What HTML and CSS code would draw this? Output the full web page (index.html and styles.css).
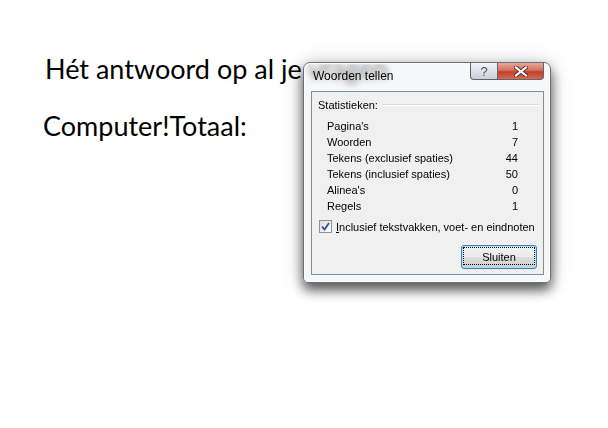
FILE: index.html
```html
<!DOCTYPE html>
<html lang="nl">
<head>
  <meta charset="UTF-8" />
  <title>Woorden tellen</title>
  <link rel="stylesheet" href="styles.css">
</head>
<body>
  <div class="doc">
    <p class="doc-line first">Hét antwoord op al je vragen</p>
    <p class="doc-line">Computer!Totaal:</p>
  </div>

  <div class="window">
    <div class="titlebar">
      <span class="title">Woorden tellen</span>
      <div class="caption-buttons">
        <div class="cap help">?</div>
        <div class="cap close">
          <svg width="14" height="11" viewBox="0 0 14 11">
            <path d="M2 1.5 L12 9.5 M12 1.5 L2 9.5" stroke="#5a2a22" stroke-width="4" stroke-linecap="square"/>
            <path d="M2 1.5 L12 9.5 M12 1.5 L2 9.5" stroke="#ffffff" stroke-width="2.2" stroke-linecap="square"/>
          </svg>
        </div>
      </div>
    </div>
    <div class="client">
      <div class="group-head">
        <span class="group-label">Statistieken:</span>
        <span class="group-line"></span>
      </div>
      <div class="stats">
        <div class="stat-row"><span>Pagina's</span><span>1</span></div>
        <div class="stat-row"><span>Woorden</span><span>7</span></div>
        <div class="stat-row"><span>Tekens (exclusief spaties)</span><span>44</span></div>
        <div class="stat-row"><span>Tekens (inclusief spaties)</span><span>50</span></div>
        <div class="stat-row"><span>Alinea's</span><span>0</span></div>
        <div class="stat-row"><span>Regels</span><span>1</span></div>
      </div>
      <div class="check">
        <span class="box">
          <svg width="9" height="9" viewBox="0 0 9 9">
            <path d="M1 4.5 L3.5 7.5 L8 1" fill="none" stroke="#2b4f9c" stroke-width="1.8"/>
          </svg>
        </span>
        <span><u>I</u>nclusief tekstvakken, voet- en eindnoten</span>
      </div>
      <div class="actions">
        <div class="btn"><span class="focus">Sluiten</span></div>
      </div>
    </div>
  </div>
</body>
</html>
```

FILE: styles.css
```css
body {
  margin: 0;
  background-color: #ffffff;
  font-family: 'Lato', sans-serif;
  color: #000000;
}

.doc {
  padding: 54px 0 0 45px;
}

.doc-line {
  margin: 0;
  font-size: 27px;
  line-height: 30px;
}

.doc-line + .doc-line {
  margin-top: 27px;
  margin-left: -2px;
}

/* dialog window */
.window {
  position: absolute;
  left: 303px;
  top: 62px;
  width: 246px;
  height: 219px;
  border: 1px solid #6a6f75;
  border-radius: 7px 7px 5px 5px;
  background-color: rgba(238, 240, 242, 0.55);
  backdrop-filter: blur(3px);
  box-shadow: 0 7px 12px rgba(0, 0, 0, 0.6), 0 2px 20px rgba(0, 0, 0, 0.25), inset 0 0 0 1px rgba(255, 255, 255, 0.85);
  font-family: 'Liberation Sans', sans-serif;
  font-size: 11px;
  color: #000000;
}

.titlebar {
  display: flex;
  justify-content: space-between;
  height: 28px;
}

.title {
  font-size: 12px;
  padding: 6px 0 0 9px;
}

.caption-buttons {
  display: flex;
  margin-right: 6px;
  height: 18px;
}

.cap {
  display: flex;
  align-items: center;
  justify-content: center;
  height: 16px;
  border: 1px solid #5c6470;
  border-top: none;
}

.help {
  width: 26px;
  border-radius: 0 0 0 4px;
  border-right: none;
  background: linear-gradient(#f4f5f6, #dde0e4 50%, #ccd1d7);
  color: #4a5160;
  font-size: 13px;
}

.close {
  width: 45px;
  border-radius: 0 0 4px 0;
  background: linear-gradient(#e8a899, #d5725f 45%, #c2402a 55%, #d46a4e);
}

.client {
  margin: 0 6px 0 7px;
  height: 182px;
  border: 1px solid #858c93;
  background-color: #f0f0f0;
}

.group-head {
  display: flex;
  align-items: center;
  padding: 7px 4px 0 6px;
}

.group-line {
  flex: 1;
  margin-left: 4px;
  height: 0;
  border-top: 1px solid #d8dde2;
  border-bottom: 1px solid #ffffff;
}

.stats {
  padding: 7px 25px 0 15px;
}

.stat-row {
  display: flex;
  justify-content: space-between;
  height: 16px;
  line-height: 16px;
}

.check {
  display: flex;
  align-items: center;
  margin: 6px 0 0 7px;
}

.box {
  display: flex;
  align-items: center;
  justify-content: center;
  width: 11px;
  height: 11px;
  margin-right: 4px;
  border: 1px solid #8e8f8f;
  background: linear-gradient(135deg, #dcdcdc, #ffffff);
}

.actions {
  display: flex;
  justify-content: flex-end;
  padding: 12px 6px 0 0;
}

.btn {
  width: 72px;
  height: 20px;
  padding: 1px;
  border: 1px solid #3c7fb1;
  border-radius: 3px;
  background: linear-gradient(#f2f2f2, #ebebeb 50%, #dddddd 51%, #cfcfcf);
  box-shadow: inset 0 0 0 1px #a6e3fb;
}

.focus {
  display: block;
  height: 18px;
  line-height: 18px;
  text-align: center;
  border: 1px dotted #000000;
  box-sizing: border-box;
}
```
